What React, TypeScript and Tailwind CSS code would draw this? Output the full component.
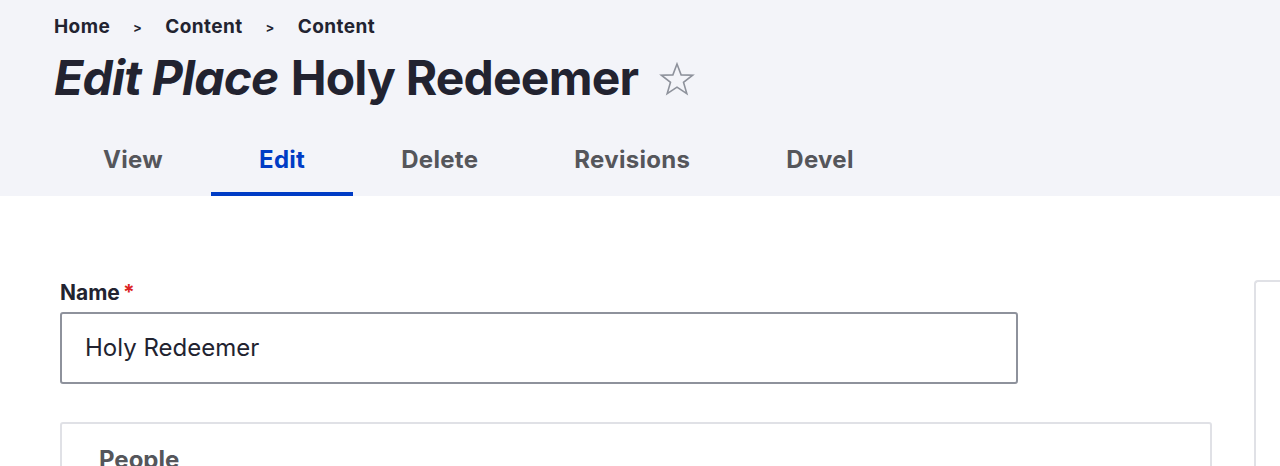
export default function App() {
  const tabs = ['View', 'Edit', 'Delete', 'Revisions', 'Devel'];
  return (
    <div className="h-[466px] overflow-hidden bg-white font-['Inter',sans-serif] text-[#222330]">
      {/* Header */}
      <div className="bg-[#f3f4f9] pl-[54px]">
        <nav className="flex items-center pt-[14px] text-[19px] font-bold leading-[26px] tracking-[0.4px] text-[#222330]">
          <span>Home</span>
          <span className="mx-[23px] text-[13px]">&gt;</span>
          <span>Content</span>
          <span className="mx-[23px] text-[13px]">&gt;</span>
          <span>Content</span>
        </nav>
        <h1 className="mt-[10px] flex items-center text-[48px] font-bold leading-[56px] tracking-[-0.8px]">
          <em className="italic">Edit Place</em>
          <span className="ml-[12px]">Holy Redeemer</span>
          <svg className="ml-[20px] mt-[2px] h-[38px] w-[38px]" viewBox="0 0 24 24" fill="none" stroke="#8e929c" strokeWidth="1" strokeLinejoin="miter">
            <path d="M12 2.5l2.6 6.9 7.3.2-5.8 4.5 2.1 7.1L12 17.1l-6.2 4.1 2.1-7.1-5.8-4.5 7.3-.2z" />
          </svg>
        </h1>
        <div className="mt-[22px] flex pl-px">
          {tabs.map((t) =>
            t === 'Edit' ? (
              <div key={t} className="flex h-[68px] items-center border-b-4 border-[#003cc5] px-12 text-[24px] font-bold tracking-[0.3px] text-[#003cc5]">
                {t}
              </div>
            ) : (
              <div key={t} className="flex h-[68px] items-center border-b-4 border-transparent px-12 text-[24px] font-bold tracking-[0.3px] text-[#55565b]">
                {t}
              </div>
            )
          )}
        </div>
      </div>

      {/* Body */}
      <div className="flex pt-[85px]">
        <div className="ml-[60px] w-[1152px]">
          <label className="flex text-[21px] font-bold leading-[24px]">
            Name<span className="ml-[3px] text-[#dc2323]">*</span>
          </label>
          <div className="mt-[7px] flex h-[72px] w-[958px] items-center rounded-[3px] border-2 border-[#8e929c] px-[23px] text-[24px]">
            Holy Redeemer
          </div>
          <div className="mt-[38px] h-[80px] rounded-[3px] border-2 border-[#e0e1e6] pl-[37px] pt-[18px] text-[24px] font-bold text-[#55565b]">
            People
          </div>
        </div>
        <div className="-mt-[1px] ml-[42px] h-[300px] flex-1 rounded-tl-[4px] border-l-2 border-t-2 border-[#e0e1e6]" />
      </div>
    </div>
  );
}
